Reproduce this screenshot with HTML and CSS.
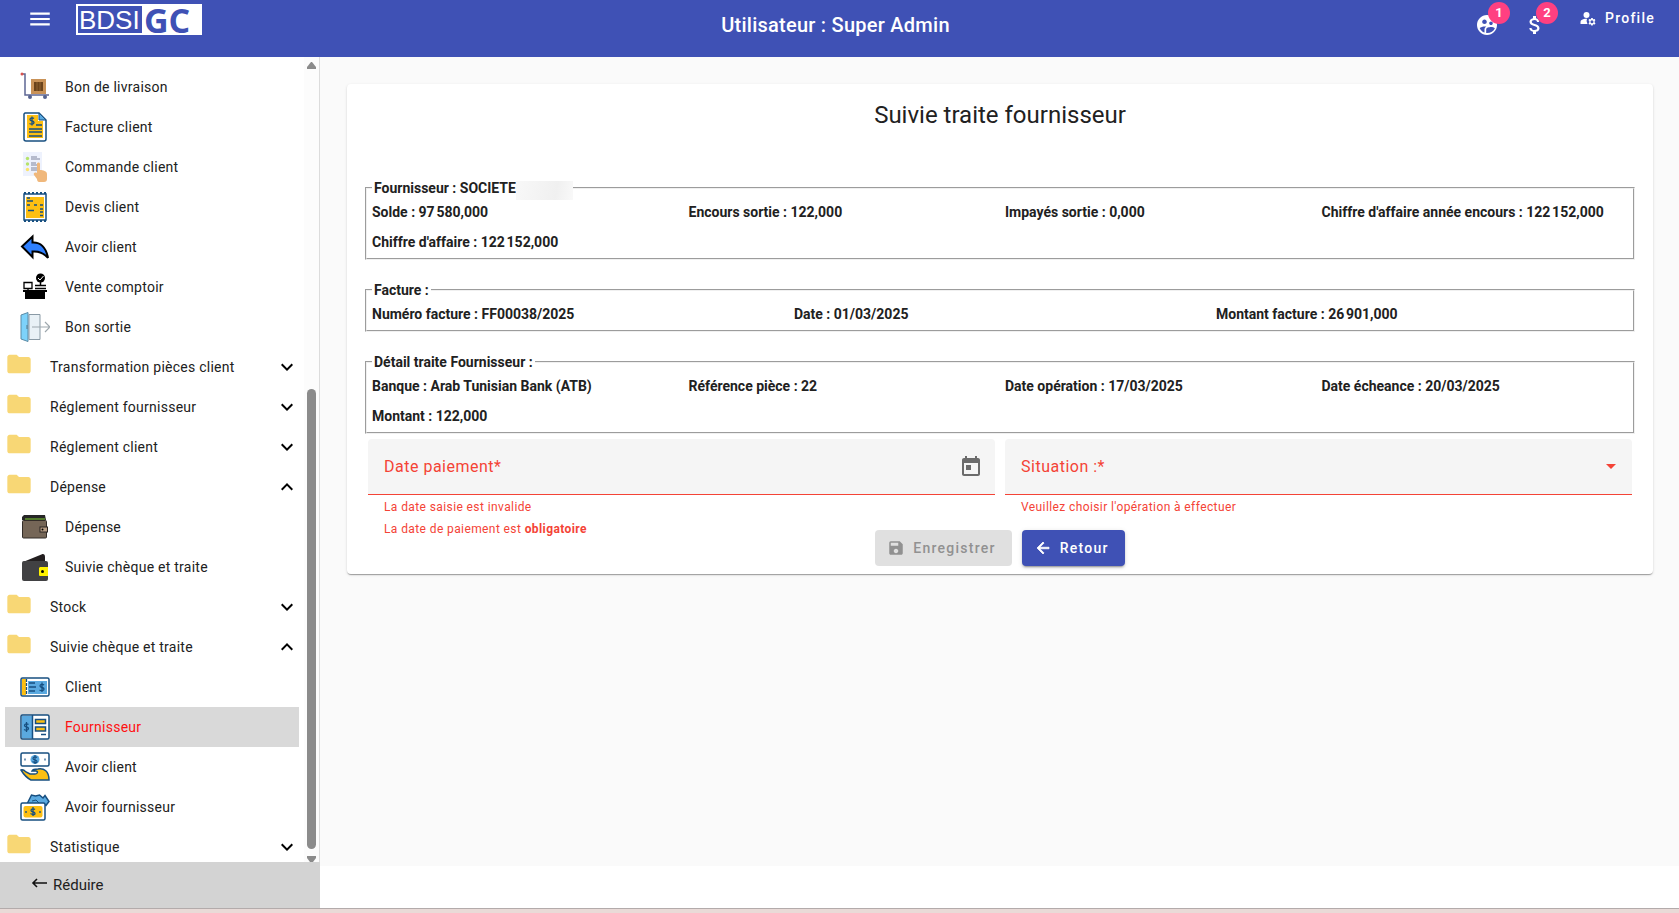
FILE: index.html
```html
<!DOCTYPE html>
<html lang="fr">
<head>
  <meta charset="UTF-8" />
  <title>BDSI GC - Suivie traite fournisseur</title>
  <meta name="viewport" content="width=device-width, initial-scale=1.0" />
  <link rel="stylesheet" href="styles.css">
</head>
<body>
  <!-- shared icons -->
  <svg class="sprite" aria-hidden="true">
    <symbol id="folder" viewBox="0 0 24 24"><path fill="#f8d775" d="M10 4H4c-1.100 0-2 .9-2 2v12c0 1.100.9 2 2 2h16c1.100 0 2-.9 2-2V8c0-1.100-.9-2-2-2h-8z"/></symbol>
    <symbol id="more" viewBox="0 0 24 24"><path d="M16.590 8.590 12 13.170 7.410 8.590 6 10l6 6 6-6z"/></symbol>
    <symbol id="less" viewBox="0 0 24 24"><path d="m12 8-6 6 1.410 1.410L12 10.830l4.590 4.580L18 14z"/></symbol>
  </svg>

  <header class="toolbar">
    <div class="toolbar-start">
      <button class="icon-btn menu-btn" aria-label="Menu">
        <svg width="26" height="26" viewBox="0 0 24 24"><path fill="#fff" d="M3 18h18v-2H3zm0-5h18v-2H3zm0-7v2h18V6z"/></svg>
      </button>
      <div class="logo"><span class="logo-bdsi">BDSI</span><span class="logo-gc">GC</span></div>
    </div>
    <h1 class="toolbar-title">Utilisateur : Super Admin</h1>
    <div class="toolbar-end">
      <button class="icon-btn badge-btn" aria-label="Clients">
        <svg width="24" height="24" viewBox="0 0 24 24"><path fill="#fff" fill-rule="evenodd" d="M12 2C6.480 2 2 6.480 2 12s4.480 10 10 10 10-4.480 10-10S17.520 2 12 2zm4 6.400c1 0 1.800.8 1.800 1.800S17 12 16 12s-1.800-.8-1.800-1.800S15 8.400 16 8.400zM9.500 6.500c1.300 0 2.300 1 2.300 2.300s-1 2.300-2.300 2.300-2.300-1-2.300-2.300 1-2.300 2.300-2.300zm0 9.800v3.300c-2.200-.7-4-2.400-4.800-4.600 1-1 3.300-1.600 4.800-1.600.5 0 1.200.1 1.900.2-1.600.9-1.900 2.100-1.900 2.700zM12 20c-.3 0-.5 0-.8-.1v-3.600c0-1.500 3-2.200 4.800-2.200 1.200 0 3.100.4 3.900 1.100C18.800 18.100 15.700 20 12 20z"/></svg>
        <span class="badge">1</span>
      </button>
      <button class="icon-btn badge-btn" aria-label="Paiements">
        <svg width="24" height="24" viewBox="0 0 24 24"><path fill="#fff" d="M11.800 10.900c-2.270-.59-3-1.200-3-2.150 0-1.090 1.010-1.850 2.700-1.850 1.780 0 2.440.85 2.500 2.100h2.210c-.07-1.720-1.120-3.300-3.210-3.810V3h-3v2.160c-1.940.42-3.500 1.680-3.500 3.610 0 2.310 1.910 3.460 4.700 4.130 2.500.6 3 1.480 3 2.410 0 .69-.49 1.790-2.700 1.790-2.060 0-2.870-.92-2.980-2.100h-2.200c.12 2.190 1.760 3.420 3.680 3.830V21h3v-2.150c1.950-.37 3.500-1.500 3.500-3.550 0-2.840-2.430-3.810-4.700-4.400z"/></svg>
        <span class="badge">2</span>
      </button>
      <button class="icon-btn profile-btn">
        <svg width="18" height="18" viewBox="0 0 24 24"><g fill="#fff"><circle cx="10" cy="8" r="4"/><path d="M10.700 13H10c-2.400 0-4.700.7-6.600 1.800-.9.500-1.400 1.500-1.400 2.600V20h9.300a7 7 0 0 1-.6-7z"/><path fill-rule="evenodd" d="m20.800 16 1.100-1-1-1.700-1.400.4a3 3 0 0 0-.9-.5L18.300 12h-2l-.3 1.300a3 3 0 0 0-1 .5l-1.400-.4-1 1.700 1.200 1a3 3 0 0 0 0 1.900l-1.100 1 1 1.700 1.400-.4.900.5.300 1.300h2l.3-1.300 1-.5 1.400.4 1-1.700-1.200-1a3 3 0 0 0 0-2zM17.300 19a2 2 0 1 1 0-4 2 2 0 0 1 0 4z"/></g></svg>
        Profile
      </button>
    </div>
  </header>

  <div class="layout">
    <aside class="sidebar">
      <div class="sidebar-scroll">
        <nav class="menu">
          <a class="item" href="#">
            <svg class="pic" viewBox="0 0 30 30"><path d="M1 2h4v21h24" fill="none" stroke="#5d6794" stroke-width="1.500"/><circle cx="2" cy="2" r="1.500" fill="#d9534f"/><path fill="#c99257" d="M11 7h15v15H11z"/><path fill="#6b431b" d="M14 10h9v9h-9z"/><path d="M17 10v9M20 10v9" stroke="#8f6331"/><circle cx="10" cy="25" r="2" fill="#56628f"/><circle cx="25" cy="25" r="2" fill="#56628f"/></svg>
            Bon de livraison
          </a>
          <a class="item" href="#">
            <svg class="pic" viewBox="0 0 30 30"><path d="M5 1h14l7 7v19a2 2 0 0 1-2 2H6a2 2 0 0 1-2-2V2z" fill="#fff" stroke="#174f80" stroke-width="1.500"/><path fill="#fdbf12" d="M7 3h11v6h5v17H7z"/><path d="M19 1v7h7z" fill="#5aa9e0" stroke="#174f80"/><path d="M9 17h13M9 20h13M9 24h13M16 13h6" stroke="#174f80" stroke-width="1.500"/><path d="M14 6.500c-1-1-4-1-4 1s4 1 4 3-3 2-4.500 1M12 4.500v9" fill="none" stroke="#174f80" stroke-width="1.300"/></svg>
            Facture client
          </a>
          <a class="item" href="#">
            <svg class="pic" viewBox="0 0 30 30"><path fill="#eef2fd" d="M3 0h19v24H3z"/><circle cx="7.500" cy="6.500" r="1.700" fill="#b5e36b"/><circle cx="7.500" cy="12" r="1.700" fill="#b5e36b"/><circle cx="7.500" cy="17.500" r="1.700" fill="#fbe36b"/><path d="M11 5h6M11 7h9M11 11h5M11 13h6M11 16h6M11 18h6" stroke="#7f849c"/><path fill="#f0b87c" d="M17 12c0-2 3-2 3 0v6c3 0 7 1 7 4v5c0 2-1 3-3 3h-5c-1 0-2-1-2-3l-3-4c-1-2 1-3 3-2z"/></svg>
            Commande client
          </a>
          <a class="item" href="#">
            <svg class="pic" viewBox="0 0 30 30"><path d="M4 2v26h22V2z" fill="#fff" stroke="#174f80" stroke-width="1.500"/><path d="M4 1h22M4 29h22" stroke="#174f80" stroke-width="2" stroke-dasharray="2 2"/><path fill="#fdbf12" d="M6 5h18v21H6z"/><path d="M7 6h3M7 9h6M7 13h3M14 13h3M20 13h3M8 18.500h6M20 17h3M20 20h3M20 23.500h3" stroke="#174f80" stroke-width="1.500"/></svg>
            Devis client
          </a>
          <a class="item" href="#">
            <svg class="pic" viewBox="0 0 30 30"><path d="M2 14.500 12.500 4.500v6C20 10 26 15 28 26c-4-5-9-7-15.500-6.500V25z" fill="#2f80ff" stroke="#000" stroke-width="2"/></svg>
            Avoir client
          </a>
          <a class="item" href="#">
            <svg class="pic" viewBox="0 0 30 30"><path d="M4 10.500h8v6H4zM8 17v2" fill="none" stroke="#000" stroke-width="1.300"/><circle cx="20.500" cy="6" r="4.500"/><path d="m18 6 2 2 3.500-4" fill="none" stroke="#fff"/><path d="M20.500 10v3M15 13.500h11M15 16.500h11" stroke="#000" stroke-width="1.500"/><path d="M3 18h24v2H3zM5 20h20v7H5z"/></svg>
            Vente comptoir
          </a>
          <a class="item" href="#">
            <svg class="pic" viewBox="0 0 30 30"><path d="M9 2.500h11v25H9z" fill="#e9f1f6" stroke="#8a9aa5"/><path d="M1 3 8 .5v29L1 27z" fill="#7dd2fa" stroke="#5b8aa5"/><path d="M7 13v4" stroke="#5b7585"/><path d="M12 15h17M25 10l5 5-5 5" fill="none" stroke="#9ea7ad" stroke-width="1.200"/></svg>
            Bon sortie
          </a>
          <button class="group"><svg class="folder"><use href="#folder"/></svg><span>Transformation pièces client</span><svg class="chevron"><use href="#more"/></svg></button>
          <button class="group"><svg class="folder"><use href="#folder"/></svg><span>Réglement fournisseur</span><svg class="chevron"><use href="#more"/></svg></button>
          <button class="group"><svg class="folder"><use href="#folder"/></svg><span>Réglement client</span><svg class="chevron"><use href="#more"/></svg></button>
          <button class="group"><svg class="folder"><use href="#folder"/></svg><span>Dépense</span><svg class="chevron"><use href="#less"/></svg></button>
          <a class="item" href="#">
            <svg class="pic" viewBox="0 0 30 30"><path fill="#262626" d="M4 3h21l1 5H2V5z"/><path d="M5 7h20" stroke="#6cab30" stroke-width="1.300"/><rect x="2.500" y="8.500" width="24" height="17.500" rx="1" fill="#756657" stroke="#332d29"/><rect x="20" y="15" width="7.500" height="5" fill="#b79e86" stroke="#2b2522"/><circle cx="22.500" cy="17.500" r="1"/></svg>
            Dépense
          </a>
          <a class="item" href="#">
            <svg class="pic" viewBox="0 0 30 30"><path fill="#231f20" d="M3 10 22 2.200c2-.5 3 1 3 2.800v5z"/><rect x="2" y="9" width="26" height="20" rx="2" fill="#414143"/><path fill="#fff200" d="M20 15h8v9h-8a1 1 0 0 1-1-1v-7z"/><circle cx="22.500" cy="19.500" r="1.500"/></svg>
            Suivie chèque et traite
          </a>
          <button class="group"><svg class="folder"><use href="#folder"/></svg><span>Stock</span><svg class="chevron"><use href="#more"/></svg></button>
          <button class="group"><svg class="folder"><use href="#folder"/></svg><span>Suivie chèque et traite</span><svg class="chevron"><use href="#less"/></svg></button>
          <a class="item" href="#">
            <svg class="pic" viewBox="0 0 30 30"><rect x="1" y="6" width="28" height="18" rx="1.500" fill="#fff" stroke="#174f80" stroke-width="1.500"/><path fill="#fdbf12" d="M2 7h4v16H2z"/><path fill="#5aa9e0" d="M8 9h19v13H8z"/><path d="M6.500 7v16" stroke="#174f80" stroke-width="1.300" stroke-dasharray="3 1"/><path d="M9 11h6M9 15h7M9 19h6" stroke="#174f80" stroke-width="1.500"/><path d="M24 13c-1-1-4-1-4 1s4 1 4 3-3 2-4.500 1M22 10.500v9.500" fill="none" stroke="#174f80" stroke-width="1.300"/></svg>
            Client
          </a>
          <a class="item active" href="#" aria-current="page">
            <svg class="pic" viewBox="0 0 30 30"><rect x="1" y="3" width="28" height="24" rx="1.500" fill="#fff" stroke="#174f80" stroke-width="1.500"/><path d="M2 4h10v22H2z" fill="#5aa9e0"/><path d="M12.500 3v24" stroke="#174f80" stroke-width="1.500"/><path d="M15.500 7.500h10v4h-10zM15.500 15h10v4h-10z" fill="#fdbf12" stroke="#174f80" stroke-width="1.500"/><path d="M21 22.500h5" stroke="#174f80" stroke-width="1.500"/><path d="M8.500 12.500c-1-1-4-1-4 1s4 1 4 3-3 2-4.500 1M6.500 10v10" fill="none" stroke="#174f80" stroke-width="1.300"/></svg>
            Fournisseur
          </a>
          <a class="item" href="#">
            <svg class="pic" viewBox="0 0 30 30"><rect x="1" y="1" width="28" height="13" rx="1.500" fill="#fff" stroke="#174f80" stroke-width="1.500"/><circle cx="15" cy="7.500" r="4.500" fill="#5aa9e0"/><path d="M17 5.500c-1-1-4-1-4 1s4 1 4 3-3 1-4.500 0M15 3v9M5 6.500v2M25 6.500v2" fill="none" stroke="#174f80" stroke-width="1.200"/><path d="M1 18c2-1 3 0 5 2l4 2h5c3 0 3-3 1-3h-4c1-2 3-2 6-2 6-1 11 2 11 11H11C7 26 4 23 1 18z" fill="#fdbf12" stroke="#174f80" stroke-width="1.500"/></svg>
            Avoir client
          </a>
          <a class="item" href="#">
            <svg class="pic" viewBox="0 0 30 30"><path d="M7 12 11.500 3l4 1 4-1 3.500 3 2-2.500 4 6-3 4-2-1.500-1 3z" fill="#5aa9e0" stroke="#174f80" stroke-width="1.500"/><path d="m12 9 4-1 3 3" fill="none" stroke="#174f80"/><rect x="1" y="11" width="24" height="17" rx="1.500" fill="#fff" stroke="#174f80" stroke-width="1.500"/><rect x="3.500" y="14" width="19" height="11.500" rx="2" fill="#fdbf12"/><path d="M15 17.500c-1-1-4-1-4 1s4 1 4 3-3 1-4.500 0M13 15v9M6 19v2M20 19v2" fill="none" stroke="#174f80" stroke-width="1.300"/></svg>
            Avoir fournisseur
          </a>
          <button class="group"><svg class="folder"><use href="#folder"/></svg><span>Statistique</span><svg class="chevron"><use href="#more"/></svg></button>
        </nav>
        <div class="scrollbar" aria-hidden="true">
          <svg width="9" height="7" viewBox="0 0 9 7"><path fill="#8b8b8b" d="M4 0h1l4 5v2H0V5z"/></svg>
          <div class="scrollbar-track"><div class="scrollbar-thumb"></div></div>
          <svg width="9" height="6" viewBox="0 0 9 6"><path fill="#8b8b8b" d="M0 0h9v2L6 6H3L0 2z"/></svg>
        </div>
      </div>
      <button class="reduce-btn">
        <svg width="16" height="16" viewBox="0 0 16 16"><path d="M16 6H2M6 2 2 6l4 4" fill="none" stroke="#111" stroke-width="1.600"/></svg>
        Réduire
      </button>
    </aside>

    <main class="content">
      <section class="card">
        <h2 class="card-title">Suivie traite fournisseur</h2>

        <fieldset>
          <legend>Fournisseur : SOCIETE<span class="masked"></span></legend>
          <div class="infos cols-4">
            <span>Solde : 97&#8239;580,000</span>
            <span>Encours sortie : 122,000</span>
            <span>Impayés sortie : 0,000</span>
            <span>Chiffre d'affaire année encours : 122&#8239;152,000</span>
            <span>Chiffre d'affaire : 122&#8239;152,000</span>
          </div>
        </fieldset>

        <fieldset>
          <legend>Facture :</legend>
          <div class="infos cols-3">
            <span>Numéro facture : FF00038/2025</span>
            <span>Date : 01/03/2025</span>
            <span>Montant facture : 26&#8239;901,000</span>
          </div>
        </fieldset>

        <fieldset>
          <legend>Détail traite Fournisseur :</legend>
          <div class="infos cols-4">
            <span>Banque : Arab Tunisian Bank (ATB)</span>
            <span>Référence pièce : 22</span>
            <span>Date opération : 17/03/2025</span>
            <span>Date écheance : 20/03/2025</span>
            <span>Montant : 122,000</span>
          </div>
        </fieldset>

        <form class="form">
          <div class="fields">
            <div>
              <div class="field">
                <label for="datePaiement">Date paiement*</label>
                <input id="datePaiement" type="text" />
                <button type="button" class="icon-btn" aria-label="Ouvrir le calendrier">
                  <svg width="24" height="24" viewBox="0 0 24 24"><path fill="#6b6b6b" d="M19 3h-1V1h-2v2H8V1H6v2H5c-1.110 0-1.990.9-1.990 2L3 19c0 1.100.89 2 2 2h14c1.100 0 2-.9 2-2V5c0-1.100-.9-2-2-2zm0 16H5V8h14v11zM7 10h5v5H7z"/></svg>
                </button>
              </div>
              <div class="errors">
                <p>La date saisie est invalide</p>
                <p>La date de paiement est <strong>obligatoire</strong></p>
              </div>
            </div>
            <div>
              <div class="field">
                <label for="situation">Situation :*</label>
                <select id="situation"><option></option></select>
                <svg width="10" height="5" viewBox="0 0 10 5"><path fill="#f44336" d="M0 0h10L5 5z"/></svg>
              </div>
              <div class="errors">
                <p>Veuillez choisir l'opération à effectuer</p>
              </div>
            </div>
          </div>
          <div class="actions">
            <button type="submit" class="btn" disabled>
              <svg width="18" height="18" viewBox="0 0 24 24"><path fill="currentColor" d="M17 3H5a2 2 0 0 0-2 2v14c0 1.100.9 2 2 2h14c1.100 0 2-.9 2-2V7zm-5 16c-1.660 0-3-1.340-3-3s1.340-3 3-3 3 1.340 3 3-1.340 3-3 3zm3-10H5V5h10z"/></svg>
              Enregistrer
            </button>
            <button type="button" class="btn primary">
              <svg width="18" height="18" viewBox="0 0 24 24"><path fill="currentColor" stroke="currentColor" d="M20 11H7.830l5.590-5.590L12 4l-8 8 8 8 1.410-1.410L7.830 13H20z"/></svg>
              Retour
            </button>
          </div>
        </form>
      </section>
    </main>
  </div>
  <footer class="bottom-edge"></footer>
</body>
</html>
```
FILE: styles.css
```css
* {
  box-sizing: border-box;
}

html, body {
  margin: 0;
  height: 100%;
}

body {
  display: flex;
  flex-direction: column;
  font-family: Roboto, "Open Sans", sans-serif;
  font-size: 14px;
  line-height: 20px;
  color: #212121;
  background: #fff;
  overflow: hidden;
}

button, input, select {
  font: inherit;
  color: inherit;
  border: none;
  background: none;
  padding: 0;
}

button {
  cursor: pointer;
}

svg {
  flex: none;
}

.sprite {
  display: none;
}

/* toolbar */
.toolbar {
  display: grid;
  grid-template-columns: 1fr auto 1fr;
  align-items: start;
  height: 57px;
  padding: 4px 24px 0 16px;
  background: #3f51b5;
  color: #fff;
  flex: none;
}

.toolbar-start, .toolbar-end {
  display: flex;
}

.toolbar-start {
  gap: 23px;
  padding-left: 11px;
}

.toolbar-end {
  justify-content: flex-end;
  gap: 24px;
}

.icon-btn {
  display: flex;
  align-items: center;
}

.menu-btn {
  height: 30px;
}

.logo {
  display: flex;
  width: 126px;
  height: 31px;
  padding: 2px;
  background: #fff;
}

.logo span {
  line-height: 28px;
}

.logo-bdsi {
  width: 64px;
  padding-left: 1px;
  font-family: "Liberation Sans", sans-serif;
  font-size: 26px;
  background: #3f51b5;
}

.logo-gc {
  padding-left: 2px;
  font-family: "Open Sans", sans-serif;
  font-weight: 700;
  font-size: 34px;
  color: #3f51b5;
}

.toolbar-title {
  margin: 5px 0 0;
  font-size: 20px;
  line-height: 32px;
  font-weight: 500;
  letter-spacing: 0.0125em;
}

.badge-btn {
  position: relative;
  margin-top: 9px;
}

.badge {
  position: absolute;
  left: 13px;
  top: -11px;
  width: 22px;
  height: 22px;
  border-radius: 50%;
  background: #ff4081;
  font-size: 13px;
  line-height: 22px;
  font-weight: 700;
}

.profile-btn {
  gap: 8px;
  height: 28px;
  margin-left: 8px;
  font-weight: 500;
  letter-spacing: 0.0893em;
}

/* sidebar */
.layout {
  display: flex;
  flex: 1;
  min-height: 0;
}

.sidebar {
  display: flex;
  flex-direction: column;
  flex: none;
  width: 320px;
  border-right: 1px solid #dcdcdc;
}

.sidebar-scroll {
  display: flex;
  flex: 1;
  min-height: 0;
}

.menu {
  flex: 1;
  padding: 10px 5px 0;
  overflow: hidden;
}

.item, .group {
  display: flex;
  align-items: center;
  width: 100%;
  height: 40px;
  color: #212121;
  text-decoration: none;
  text-align: left;
  letter-spacing: 0.0179em;
}

.item {
  gap: 15px;
  padding-left: 15px;
}

.item.active {
  background: #d9d9d9;
  color: #f11;
}

.pic {
  width: 30px;
  height: 30px;
}

.group {
  gap: 17px;
}

.group span {
  flex: 1;
}

.folder {
  width: 28px;
  height: 28px;
  margin-bottom: 6px;
}

.chevron {
  width: 24px;
  height: 24px;
}

.scrollbar {
  display: flex;
  flex-direction: column;
  align-items: center;
  width: 15px;
  padding-top: 5px;
  background: #fcfcfc;
}

.scrollbar-track {
  display: flex;
  align-items: flex-end;
  flex: 1;
  padding-bottom: 7px;
}

.scrollbar-thumb {
  width: 9px;
  height: 59%;
  border-radius: 5px;
  background: #8b8b8b;
}

.reduce-btn {
  display: flex;
  align-items: center;
  gap: 6px;
  flex: none;
  width: 320px;
  height: 46px;
  padding: 0 31px;
  background: #d3d3d3;
  font-size: 15px;
}

/* content */
.content {
  flex: 1;
  margin-bottom: 42px;
  padding: 27px 26px 27px 27px;
  background: #fafafa;
}

.card {
  padding: 15px 16px 8px;
  border-radius: 4px;
  background: #fff;
  box-shadow: 0 2px 1px -1px rgba(0, 0, 0, 0.2), 0 1px 1px rgba(0, 0, 0, 0.14), 0 1px 3px rgba(0, 0, 0, 0.12);
}

.card-title {
  margin: 0 0 47px;
  font-size: 24px;
  line-height: 32px;
  font-weight: 400;
  text-align: center;
}

fieldset {
  margin: 0 2px 20px;
  padding: 4px 5px 6px;
  border: 2px groove #f0f0f0;
  font-weight: 700;
}

legend {
  display: flex;
  height: 20px;
  padding: 0 2px;
}

/* hidden company name */
.masked {
  width: 57px;
  height: 19px;
  margin: 3px -2px 0 0;
  background: linear-gradient(100deg, #f8f8f8, #f0f0f0 70%, #f9f9f9);
}

.infos {
  display: grid;
  gap: 10px;
}

.cols-4 {
  grid-template-columns: repeat(4, 1fr);
}

.cols-3 {
  grid-template-columns: repeat(3, 1fr);
}

/* form */
.form {
  margin-top: -15px;
  padding: 0 5px;
}

.fields {
  display: grid;
  grid-template-columns: 1fr 1fr;
  gap: 10px;
}

.field {
  display: flex;
  align-items: center;
  height: 56px;
  padding: 0 16px;
  border-bottom: 1px solid #f44336;
  border-radius: 4px 4px 0 0;
  background: #f5f5f5;
}

.field label {
  font-size: 16px;
  color: #f44336;
  letter-spacing: 0.0313em;
}

.field input, .field select {
  flex: 1;
  min-width: 0;
  height: 40px;
  outline: none;
  appearance: none;
}

.field .icon-btn {
  margin-right: -4px;
}

/* second message runs beside the buttons */
.errors {
  height: 25px;
  padding: 1px 16px 0;
  font-size: 12px;
  line-height: 22px;
  letter-spacing: 0.0333em;
  color: #f44336;
}

.errors p {
  margin: 0;
}

.actions {
  display: flex;
  justify-content: center;
  gap: 10px;
  margin-top: 10px;
}

.btn {
  display: flex;
  align-items: center;
  gap: 8px;
  height: 36px;
  padding: 0 16px 0 12px;
  border-radius: 4px;
  font-weight: 500;
  letter-spacing: 0.0893em;
}

.btn:disabled {
  background: #e0e0e0;
  color: #919191;
  cursor: default;
}

.btn.primary {
  background: #3f51b5;
  color: #fff;
  box-shadow: 0 3px 1px -2px rgba(0, 0, 0, 0.2), 0 2px 2px rgba(0, 0, 0, 0.14), 0 1px 5px rgba(0, 0, 0, 0.12);
}

.bottom-edge {
  flex: none;
  height: 5px;
  border-top: 1px solid #b3abab;
  background: #e9dad7;
}
```
